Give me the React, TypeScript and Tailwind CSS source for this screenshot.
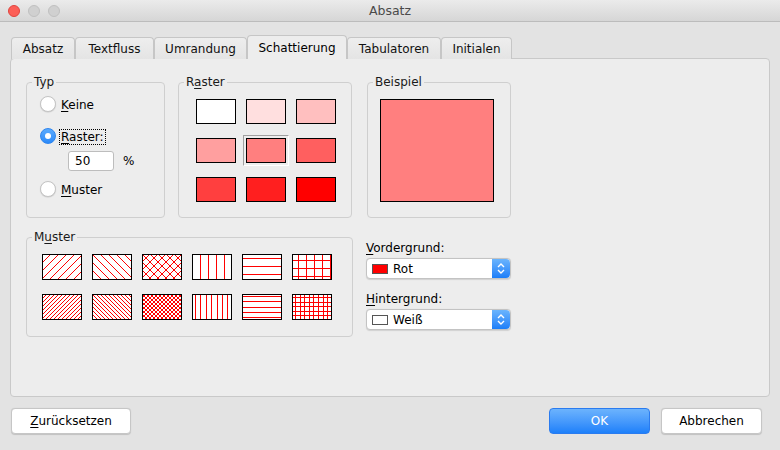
import { ReactNode } from "react";

const tabs = [
  { label: "Absatz", w: "w-[64px]" },
  { label: "Textfluss", w: "w-[79px]" },
  { label: "Umrandung", w: "w-[93px]" },
  { label: "Schattierung", w: "w-[100px]", active: true },
  { label: "Tabulatoren", w: "w-[94px]" },
  { label: "Initialen", w: "w-[71px]" },
];

const rasterColors = [
  "bg-[#ffffff]",
  "bg-[#ffdfdf]",
  "bg-[#ffbfbf]",
  "bg-[#ff9f9f]",
  "bg-[#ff7f7f]",
  "bg-[#ff5f5f]",
  "bg-[#ff3f3f]",
  "bg-[#ff1f1f]",
  "bg-[#ff0000]",
];

type Kind = "fd" | "bd" | "x" | "v" | "h" | "grid";

const muster: { kind: Kind; step: number; off: number }[] = [
  { kind: "fd", step: 8, off: 1 },
  { kind: "bd", step: 8, off: 0 },
  { kind: "x", step: 8, off: 0 },
  { kind: "v", step: 8, off: 8 },
  { kind: "h", step: 8, off: 4 },
  { kind: "grid", step: 8, off: 6 },
  { kind: "fd", step: 4, off: 1 },
  { kind: "bd", step: 4, off: 0 },
  { kind: "x", step: 4, off: 0 },
  { kind: "v", step: 5.4, off: 3 },
  { kind: "h", step: 5.3, off: 2 },
  { kind: "grid", step: 4.6, off: 3 },
];

const RED = "#ff0000";

function Hatch({ id, kind, step, off }: { id: string; kind: Kind; step: number; off: number }) {
  const W = 40;
  const H = 26;
  const bars: ReactNode[] = [];
  if (kind === "v" || kind === "grid") {
    for (let x = off; x < W - 1; x += step) {
      bars.push(<rect key={"v" + x} x={Math.round(x)} y={0} width={1} height={H} fill={RED} />);
    }
  }
  if (kind === "h" || kind === "grid") {
    for (let y = off; y < H - 1; y += step) {
      bars.push(<rect key={"h" + y} x={0} y={Math.round(y)} width={W} height={1} fill={RED} />);
    }
  }
  const diag = kind === "fd" || kind === "bd" || kind === "x";
  const cells: ReactNode[] = [];
  if (diag) {
    for (let i = 0; i < step; i++) {
      if (kind === "fd" || kind === "x")
        cells.push(<rect key={"f" + i} x={(i + off) % step} y={step - 1 - i} width={1} height={1} fill={RED} />);
      if (kind === "bd" || kind === "x") cells.push(<rect key={"b" + i} x={i} y={i} width={1} height={1} fill={RED} />);
    }
  }
  return (
    <svg width={W} height={H} className="block" shapeRendering="crispEdges">
      {diag && (
        <defs>
          <pattern id={id} width={step} height={step} patternUnits="userSpaceOnUse">
            <rect x={0} y={0} width={step} height={step} fill="#ffffff" />
            {cells}
          </pattern>
        </defs>
      )}
      <rect x={0} y={0} width={W} height={H} fill={diag ? `url(#${id})` : "#ffffff"} />
      {bars}
      <rect x={0.5} y={0.5} width={W - 1} height={H - 1} fill="none" stroke="#000000" />
    </svg>
  );
}

function Group({ title, className, children }: { title: ReactNode; className: string; children?: ReactNode }) {
  return (
    <div className={`relative border border-[#cfcfcf] rounded-[4px] ${className}`}>
      <span className="absolute -top-[9px] left-[5px] px-[2px] bg-[#ededed] leading-[16px] text-[#1a1a1a]">
        {title}
      </span>
      {children}
    </div>
  );
}

function Radio({ checked }: { checked?: boolean }) {
  return checked ? (
    <div className="w-[16px] h-[16px] rounded-full bg-gradient-to-b from-[#5aaafd] to-[#2b8af9] border border-[#2d85ef] flex items-center justify-center shrink-0">
      <div className="w-[6px] h-[6px] rounded-full bg-white" />
    </div>
  ) : (
    <div className="w-[16px] h-[16px] rounded-full bg-white border border-[#c4c4c4] shadow-[0_0.5px_1px_rgba(0,0,0,0.15)] shrink-0" />
  );
}

function Stepper() {
  return (
    <div className="w-[18px] h-full rounded-r-[4px] bg-gradient-to-b from-[#6ab4fd] to-[#1b7ef8] flex items-center justify-center">
      <svg width="8" height="13" viewBox="0 0 8 13" fill="none" stroke="#fff" strokeWidth="1.4">
        <path d="M1 5 L4 2 L7 5" />
        <path d="M1 8 L4 11 L7 8" />
      </svg>
    </div>
  );
}

function Select({ swatch, label }: { swatch: string; label: string }) {
  return (
    <div className="w-[145px] h-[21px] flex items-stretch bg-white border border-[#c3c3c3] rounded-[4px] shadow-[0_0.5px_1px_rgba(0,0,0,0.12)]">
      <div className="flex-1 flex items-center pl-[5px] gap-[5px]">
        <div className={`w-[16px] h-[10px] border border-[#555] ${swatch}`} />
        <span className="leading-[14px]">{label}</span>
      </div>
      <Stepper />
    </div>
  );
}

export default function App() {
  return (
    <div className="w-[780px] h-[450px] bg-[#e3e3e3] flex flex-col text-[12px] text-black font-['DejaVu_Sans',sans-serif] overflow-hidden">
      {/* title bar */}
      <div className="h-[22px] flex items-center border-b border-[#bcbcbc] bg-gradient-to-b from-[#ebebeb] to-[#d6d6d6]">
        <div className="w-[70px] flex items-center gap-[8px] pl-[8px]">
          <div className="w-[12px] h-[12px] rounded-full bg-[#fc5f57] border border-[#e0443e]" />
          <div className="w-[12px] h-[12px] rounded-full bg-[#d0d0d0] border border-[#c0c0c0]" />
          <div className="w-[12px] h-[12px] rounded-full bg-[#d0d0d0] border border-[#c0c0c0]" />
        </div>
        <div className="flex-1 text-center text-[#4a4a4a] text-[12.5px] leading-[16px]">Absatz</div>
        <div className="w-[70px]" />
      </div>

      <div className="px-[10px] pt-[14px]">
        {/* tabs */}
        <div className="relative z-10 flex items-end pl-[1px] h-[23px] -mb-px">
          {tabs.map((t) =>
            t.active ? (
              <div
                key={t.label}
                className={`${t.w} h-[24px] flex items-center justify-center border border-b-0 border-[#c6c6c6] rounded-t-[4px] bg-[#ededed]`}
              >
                {t.label}
              </div>
            ) : (
              <div
                key={t.label}
                className={`${t.w} h-[22px] flex items-center justify-center border border-b-0 border-[#c6c6c6] rounded-t-[4px] bg-gradient-to-b from-[#eeeeee] to-[#e4e4e4] text-[#111]`}
              >
                {t.label}
              </div>
            )
          )}
        </div>

        {/* panel */}
        <div className="h-[339px] border border-[#c9c9c9] rounded-[4px] bg-[#ededed] pt-[23px] pl-[15px]">
          <div className="flex">
            <Group title="Typ" className="w-[139px] h-[136px]">
              <div className="flex flex-col pt-[13px] pl-[13px]">
                <div className="flex items-center gap-[5px] h-[16px]">
                  <Radio />
                  <span className="leading-[14px] mt-[1px]">
                    <u className="underline-offset-2">K</u>eine
                  </span>
                </div>
                <div className="flex items-center gap-[3px] h-[16px] mt-[16px]">
                  <Radio checked />
                  <span className="border border-dotted border-black px-[1px] leading-[14px] mt-[1px]">
                    <u className="underline-offset-2">R</u>aster:
                  </span>
                </div>
                <div className="flex items-center mt-[7px] ml-[28px]">
                  <div className="w-[46px] h-[20px] bg-white border border-[#bdbdbd] rounded-[3px] flex items-center pl-[6px]">
                    50
                  </div>
                  <span className="ml-[9px]">%</span>
                </div>
                <div className="flex items-center gap-[5px] h-[16px] mt-[10px]">
                  <Radio />
                  <span className="leading-[14px] mt-[1px]">
                    <u className="underline-offset-2">M</u>uster
                  </span>
                </div>
              </div>
            </Group>

            <Group
              title={
                <>
                  R<u className="underline-offset-2">a</u>ster
                </>
              }
              className="w-[174px] h-[136px] ml-[13px]"
            >
              <div className="grid grid-cols-[46px_46px_46px] gap-x-[4px] gap-y-[8px] pt-[13px] pl-[14px]">
                {rasterColors.map((c, i) => (
                  <div
                    key={c}
                    className={`w-[46px] h-[31px] flex items-center justify-center ${
                      i === 4 ? "border border-[#a0a0a0] border-r-white border-b-white" : ""
                    }`}
                  >
                    <div className={`w-[40px] h-[25px] border border-black ${c}`} />
                  </div>
                ))}
              </div>
            </Group>

            <Group title="Beispiel" className="w-[144px] h-[136px] ml-[15px]">
              <div className="pt-[16px] pl-[12px]">
                <div className="w-[114px] h-[103px] border border-black bg-[#ff7f7f]" />
              </div>
            </Group>
          </div>

          <div className="flex mt-[19px]">
            <Group
              title={
                <>
                  M<u className="underline-offset-2">u</u>ster
                </>
              }
              className="w-[327px] h-[100px]"
            >
              <div className="grid grid-cols-[40px_40px_40px_40px_40px_40px] gap-x-[10px] gap-y-[14px] pt-[16px] pl-[15px]">
                {muster.map((m, i) => (
                  <Hatch key={i} id={"hatch" + i} kind={m.kind} step={m.step} off={m.off} />
                ))}
              </div>
            </Group>

            <div className="ml-[13px] flex flex-col">
              <span className="mt-[4px] leading-[14px]">
                <u className="underline-offset-2">V</u>ordergrund:
              </span>
              <div className="mt-[3px]">
                <Select swatch="bg-[#ff0000]" label="Rot" />
              </div>
              <span className="mt-[13px] leading-[14px]">
                <u className="underline-offset-2">H</u>intergrund:
              </span>
              <div className="mt-[3px]">
                <Select swatch="bg-white" label="Weiß" />
              </div>
            </div>
          </div>
        </div>

        {/* footer */}
        <div className="flex items-center pt-[11px] pl-[1px] pr-[8px]">
          <button className="w-[120px] h-[26px] bg-white border border-[#c6c6c6] rounded-[4px] shadow-[0_0.5px_1px_rgba(0,0,0,0.15)]">
            <u className="underline-offset-2">Z</u>urücksetzen
          </button>
          <div className="flex-1" />
          <button className="w-[101px] h-[26px] rounded-[4px] bg-gradient-to-b from-[#6cb3fd] to-[#1c80fa] border border-[#2a7bef] text-white">
            OK
          </button>
          <button className="w-[101px] h-[26px] ml-[11px] bg-white border border-[#c6c6c6] rounded-[4px] shadow-[0_0.5px_1px_rgba(0,0,0,0.15)]">
            Abbrechen
          </button>
        </div>
      </div>
    </div>
  );
}
